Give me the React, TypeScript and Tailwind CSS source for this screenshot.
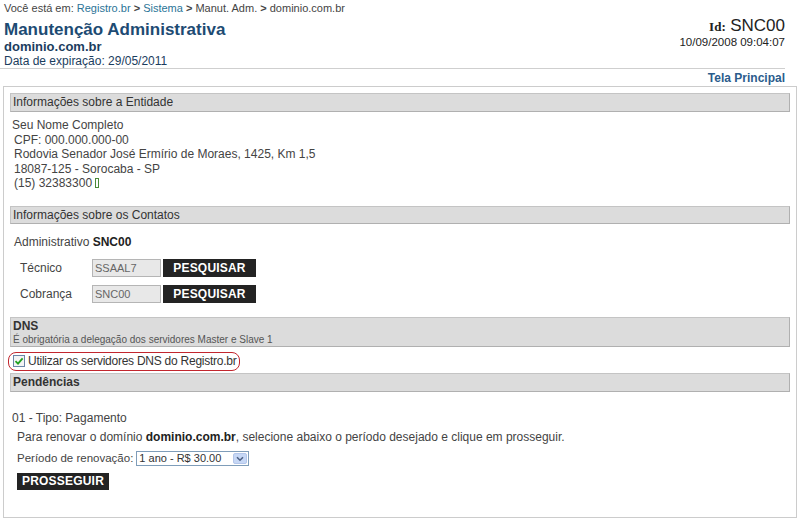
const SectionBar = ({ children, className = "" }: { children: React.ReactNode; className?: string }) => (
  <div
    className={`bg-[#dcdcdc] border border-[#c4c4c4] border-b-[#b0b0b0] border-r-[#b0b0b0] px-[2px] text-[12px] text-[#333] ${className}`}
  >
    {children}
  </div>
);

const ContactRow = ({ label, value }: { label: string; value: string }) => (
  <div className="flex items-center h-[18px]">
    <span className="w-[82px] pl-[10px] text-[12px] text-[#444]">{label}</span>
    <div className="w-[69px] h-[18px] bg-[#e8e8e8] border border-[#b5b5b5] pl-[2px] text-[11px] leading-[16px] text-[#666]">
      {value}
    </div>
    <button className="ml-[2px] w-[93px] h-[18px] bg-[#232323] text-white font-bold text-[12px] leading-[18px] tracking-[0.2px]">
      PESQUISAR
    </button>
  </div>
);

export default function App() {
  return (
    <div
      className="w-[800px] h-[522px] bg-white overflow-hidden text-[#333]"
      style={{ fontFamily: '"Liberation Sans", Arial, sans-serif' }}
    >
      {/* topo */}
      <div className="w-[785px] pl-[4px] h-[69px] border-b border-[#cfcfcf] flex justify-between">
        <div>
          <div className="text-[11px] leading-[14px] pt-[1px] text-[#444]">
            Você está em: <span className="text-[#2a7497]">Registro.br</span>{" "}
            <b>&gt;</b> <span className="text-[#2a7497]">Sistema</span> <b>&gt;</b> Manut. Adm.{" "}
            <b>&gt;</b> dominio.com.br
          </div>
          <div className="mt-[5px] text-[17px] leading-[19px] font-bold text-[#1d4b73]">
            Manutenção Administrativa
          </div>
          <div className="text-[13px] leading-[15px] font-bold text-[#1b3d5e]">dominio.com.br</div>
          <div className="text-[12px] leading-[14px] text-[#1b3d5e]">Data de expiração: 29/05/2011</div>
        </div>
        <div className="pt-[17px] text-right">
          <div className="leading-[18px] text-[#222]">
            <span className="font-bold text-[13px]" style={{ fontFamily: '"Liberation Serif", serif' }}>
              Id:
            </span>{" "}
            <span className="text-[17px]">SNC00</span>
          </div>
          <div className="text-[11.5px] leading-[12px] text-[#222]">10/09/2008 09:04:07</div>
        </div>
      </div>

      <div className="w-[785px] h-[17px] flex justify-end items-center">
        <a className="text-[12px] font-bold text-[#2b5c8c]">Tela Principal</a>
      </div>

      {/* painel */}
      <div className="ml-[3px] w-[794px] h-[432px] border border-[#cccccc] px-[6px] pt-[6px]">
        <SectionBar className="h-[19px] leading-[17px]">Informações sobre a Entidade</SectionBar>
        <div className="mt-[6px] pl-[2px] text-[12px] leading-[14.5px] text-[#444]">
          <div>Seu Nome Completo</div>
          <div className="pl-[2px]">CPF: 000.000.000-00</div>
          <div className="pl-[2px]">Rodovia Senador José Ermírio de Moraes, 1425, Km 1,5</div>
          <div className="pl-[2px]">18087-125 - Sorocaba - SP</div>
          <div className="pl-[2px] flex items-center gap-[3px]">
            (15) 32383300
            <span className="inline-block w-[4px] h-[10px] border border-[#4a8a3a]" />
          </div>
        </div>

        <SectionBar className="mt-[15px] h-[18px] leading-[16px]">Informações sobre os Contatos</SectionBar>
        <div className="mt-[11px] pl-[4px] text-[12px] leading-[14px] text-[#444]">
          Administrativo <b className="text-[#222]">SNC00</b>
        </div>
        <div className="mt-[10px]">
          <ContactRow label="Técnico" value="SSAAL7" />
        </div>
        <div className="mt-[8px]">
          <ContactRow label="Cobrança" value="SNC00" />
        </div>

        <SectionBar className="mt-[14px] h-[30px]">
          <div className="font-bold text-[12px] leading-[14px] pt-[1px]">DNS</div>
          <div className="text-[10px] leading-[13px] text-[#555]">
            É obrigatória a delegação dos servidores Master e Slave 1
          </div>
        </SectionBar>
        <div className="mt-[5px] ml-[-2px] w-[232px] h-[19px] border-[1.5px] border-[#c2262e] rounded-[8px] flex items-center pl-[4px] gap-[3px]">
          <span className="shrink-0 w-[12px] h-[12px] border border-[#6b86a8] bg-[#f4f4f4] flex items-center justify-center">
            <svg width="10" height="10" viewBox="0 0 10 10">
              <path d="M1.5 5.2 L4 7.6 L8.6 2.4" fill="none" stroke="#21a121" strokeWidth="1.8" />
            </svg>
          </span>
          <span className="whitespace-nowrap text-[12px] tracking-[-0.25px] leading-[15px] text-[#333]">
            Utilizar os servidores DNS do Registro.br
          </span>
        </div>

        <SectionBar className="mt-[2px] h-[19px] leading-[17px] font-bold">Pendências</SectionBar>
        <div className="mt-[19px] pl-[2px] text-[12px] leading-[14px] text-[#444]">01 - Tipo: Pagamento</div>
        <div className="mt-[5px] pl-[7px] text-[12px] leading-[14px] text-[#444]">
          Para renovar o domínio <b className="text-[#222]">dominio.com.br</b>, selecione abaixo o período desejado e
          clique em prosseguir.
        </div>
        <div className="mt-[8px] pl-[7px] flex items-center h-[14px] text-[11.5px] text-[#444]">
          <span>Período de renovação:</span>
          <div className="ml-[3px] w-[113px] h-[15px] border border-[#7f9db9] bg-white flex items-center justify-between pl-[2px] pr-[1px]">
            <span className="text-[11px] leading-[13px] text-[#333]">1 ano - R$ 30.00</span>
            <span className="w-[14px] h-[11px] rounded-[2px] bg-[#c6d7f5] border border-[#b3c6ea] flex items-center justify-center">
              <svg width="8" height="6" viewBox="0 0 8 6">
                <path d="M1 1.2 L4 4.2 L7 1.2" fill="none" stroke="#4d6185" strokeWidth="1.6" />
              </svg>
            </span>
          </div>
        </div>
        <button className="mt-[7px] ml-[7px] w-[92px] h-[17px] bg-[#232323] text-white font-bold text-[12px] leading-[17px] tracking-[0.2px]">
          PROSSEGUIR
        </button>
      </div>
    </div>
  );
}
